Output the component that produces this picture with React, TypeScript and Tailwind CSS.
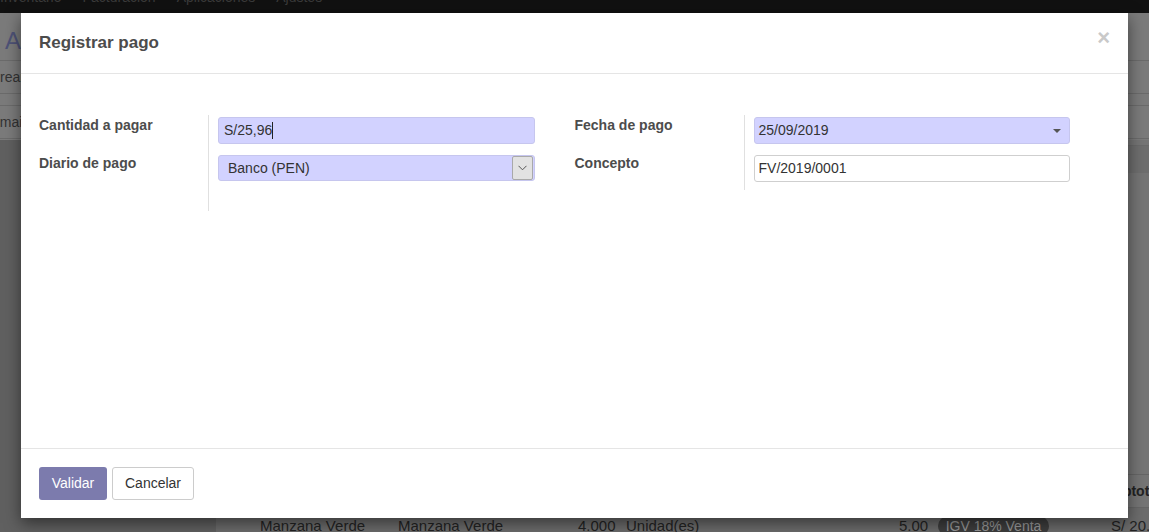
import React from "react";

function Label({ children }: { children: React.ReactNode }) {
  return (
    <div className="h-[38px] text-[14px] leading-[20px] font-bold text-[#4c4c4c]">{children}</div>
  );
}

export default function App() {
  return (
    <div className="relative w-[1149px] h-[532px] overflow-hidden bg-[#6a6a6a] font-['Liberation_Sans',Arial,sans-serif] flex flex-col">
      {/* top nav bar (dimmed) */}
      <div className="h-[13px] shrink-0 bg-[#111111] overflow-hidden">
        <div className="flex gap-[21px] -mt-[12px] text-[14px] leading-[18px] text-[#3a3a3a] whitespace-nowrap">
          <span>Inventario</span>
          <span>Facturación</span>
          <span>Aplicaciones</span>
          <span>Ajustes</span>
        </div>
      </div>

      {/* control panel (dimmed) */}
      <div className="h-[127px] shrink-0 bg-[#7b7b7b] flex flex-col">
        <div className="h-[47px] pl-[5px] pt-[16px] text-[24px] leading-[24px] text-[#4e5277] whitespace-nowrap">Ac</div>
        <div className="h-px bg-[#6b6b6b]" />
        <div className="h-[32px] flex items-center -ml-[10px] text-[14px] text-[#333]">Crear</div>
        <div className="h-px bg-[#6b6b6b]" />
        <div className="h-[11px]" />
        <div className="h-px bg-[#6b6b6b]" />
        <div className="h-[32px] flex items-center -ml-[8px] text-[14px] text-[#333]">email</div>
        <div className="h-px bg-[#6b6b6b]" />
        <div className="h-px" />
      </div>

      {/* main area (dimmed) */}
      <div className="flex-1 flex">
        <div className="w-[216px] shrink-0 bg-[#606060]" />
        <div className="flex-1 flex flex-col bg-[#757575]">
          <div className="h-[5px]" />
          <div className="h-px bg-[#6a6a6a]" />
          <div className="h-[27px] bg-[#6e6e6e]" />
          <div className="flex-1" />
          <div className="h-px bg-[#666]" />
          <div className="h-[32px] flex items-center pl-[889px] text-[14px] font-bold text-[#222]">Subtotal</div>
          <div className="h-px bg-[#666]" />
          <div className="h-[24px] flex items-start pt-[9px] pl-[44px] text-[15px] leading-[18px] text-[#232323] whitespace-nowrap bg-[#6c6c6c]">
            <span className="w-[138px]">Manzana Verde</span>
            <span className="w-[180px]">Manzana Verde</span>
            <span className="w-[48px]">4.000</span>
            <span className="w-[273px]">Unidad(es)</span>
            <span className="w-[39px]">5.00</span>
            <span className="w-[111px] h-[20px] -mt-[1px] rounded-full bg-[#3e3e3e] text-[#9a9a9a] text-[14px] flex items-center justify-center">IGV 18% Venta</span>
            <span className="ml-[62px]">S/ 20.00</span>
          </div>
        </div>
      </div>

      {/* modal */}
      <div className="absolute left-[21px] top-[13px] w-[1107px] h-[505px] bg-white shadow-[0_5px_15px_rgba(0,0,0,0.5)] flex flex-col">
        <div className="h-[61px] shrink-0 border-b border-[#e5e5e5] px-[18px] flex items-center justify-between">
          <div className="text-[17px] font-bold text-[#4c4c4c]">Registrar pago</div>
          <div className="mb-[10px] text-[22px] leading-[22px] font-bold text-[#c9c9c9]">×</div>
        </div>

        <div className="flex-1 px-[18px] pt-[41px] flex">
          {/* left group */}
          <div className="w-1/2 flex">
            <div className="w-[169px] shrink-0 flex flex-col">
              <Label>Cantidad a pagar</Label>
              <Label>Diario de pago</Label>
            </div>
            <div className="flex-1 h-[96px] border-l border-[#e0e0e0] pl-[9px] pr-[40px] pt-[2px] flex flex-col gap-[11px]">
              <div className="h-[27px] rounded-[3px] bg-[#d2d2ff] border border-[#c6c6ee] flex items-center pl-[5px] text-[14px] text-[#333]">
                <span>S/25,96</span>
                <span className="w-px h-[17px] bg-[#222]" />
              </div>
              <div className="h-[26px] rounded-[3px] bg-[#d2d2ff] border border-[#c6c6ee] flex items-center pl-[9px] pr-px text-[14px] text-[#333]">
                <span className="flex-1">Banco (PEN)</span>
                <span className="w-[21px] h-[24px] bg-[#e2e2e2] border border-[#a9a9a9] rounded-[2px] flex items-center justify-center">
                  <svg width="9" height="6" viewBox="0 0 9 6" fill="none">
                    <path d="M0.5 0.8 L4.5 4.8 L8.5 0.8" stroke="#555" strokeWidth="1" />
                  </svg>
                </span>
              </div>
            </div>
          </div>

          {/* right group */}
          <div className="w-1/2 flex">
            <div className="w-[169px] shrink-0 flex flex-col">
              <Label>Fecha de pago</Label>
              <Label>Concepto</Label>
            </div>
            <div className="flex-1 h-[75px] border-l border-[#e0e0e0] pl-[9px] pr-[40px] pt-[2px] flex flex-col gap-[11px]">
              <div className="h-[27px] rounded-[3px] bg-[#d2d2ff] border border-[#c6c6ee] flex items-center pl-[4px] pr-[8px] text-[14px] text-[#333]">
                <span className="flex-1">25/09/2019</span>
                <svg width="8" height="4" viewBox="0 0 8 4">
                  <path d="M0 0 L8 0 L4 4 Z" fill="#555" />
                </svg>
              </div>
              <div className="h-[27px] rounded-[3px] bg-white border border-[#cfcfcf] flex items-center pl-[4px] text-[14px] text-[#333]">
                FV/2019/0001
              </div>
            </div>
          </div>
        </div>

        <div className="h-[70px] shrink-0 border-t border-[#e5e5e5] px-[18px] pt-[18px] flex items-start gap-[5px]">
          <button className="w-[68px] h-[33px] rounded-[3px] bg-[#7c7bad] text-white text-[14px]">Validar</button>
          <button className="w-[82px] h-[33px] rounded-[3px] bg-white border border-[#cccccc] text-[#333] text-[14px]">Cancelar</button>
        </div>
      </div>
    </div>
  );
}
